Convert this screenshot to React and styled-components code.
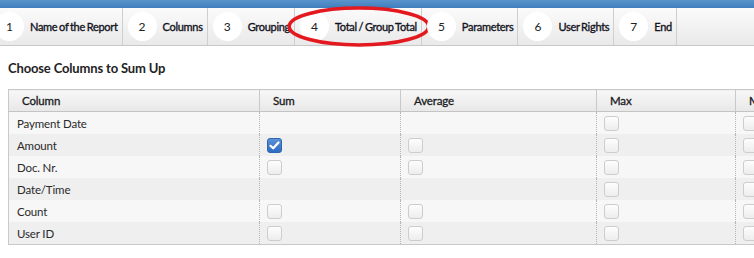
import React from 'react'
import styled, { createGlobalStyle } from 'styled-components'

const GlobalStyle = createGlobalStyle`
  body {
    margin: 0;
    background: #fff;
    font-family: Lato, "Noto Sans", sans-serif;
    overflow: hidden;
  }
`

const steps = [
  { n: 1, label: 'Name of the Report' },
  { n: 2, label: 'Columns' },
  { n: 3, label: 'Grouping' },
  { n: 4, label: 'Total / Group Total', active: true },
  { n: 5, label: 'Parameters' },
  { n: 6, label: 'User Rights' },
  { n: 7, label: 'End' },
]

// null = no checkbox, 0 = empty, 1 = checked
const rows = [
  { name: 'Payment Date', cells: [null, null, 0, 0] },
  { name: 'Amount', cells: [1, 0, 0, 0] },
  { name: 'Doc. Nr.', cells: [0, 0, 0, 0] },
  { name: 'Date/Time', cells: [null, null, 0, 0] },
  { name: 'Count', cells: [0, 0, 0, 0] },
  { name: 'User ID', cells: [0, 0, 0, 0] },
]

const columns = [
  { title: 'Column', width: 251 },
  { title: 'Sum', width: 141 },
  { title: 'Average', width: 196 },
  { title: 'Max', width: 139 },
  { title: 'Min', width: 140 },
]

function Check({ on }) {
  return (
    <Box on={on ? 1 : 0}>
      {on ? (
        <svg width="11" height="9" viewBox="0 0 11 9">
          <path d="M1.5 4.8 L4.2 7.3 L9.5 1.5" fill="none" stroke="#fff" strokeWidth="2.2" strokeLinecap="round" strokeLinejoin="round" />
        </svg>
      ) : null}
    </Box>
  )
}

export default function App() {
  return (
    <Page>
      <GlobalStyle />
      <TopBar />
      <Wizard>
        {steps.map((s, i) => (
          <Step key={s.n} first={i === 0 ? 1 : 0}>
            <Circle>{s.n}</Circle>
            <StepLabel>{s.label}</StepLabel>
            {s.active ? (
              <Ring viewBox="0 0 100 100" preserveAspectRatio="none">
                <ellipse cx="50" cy="50" rx="48.5" ry="45" fill="none" stroke="#e3191f" strokeWidth="3.6" vectorEffect="non-scaling-stroke" />
              </Ring>
            ) : null}
          </Step>
        ))}
      </Wizard>

      <Title>Choose Columns to Sum Up</Title>

      <Table>
        <colgroup>
          {columns.map((c) => (
            <col key={c.title} style={{ width: c.width }} />
          ))}
        </colgroup>
        <thead>
          <tr>
            {columns.map((c) => (
              <Th key={c.title}>{c.title}</Th>
            ))}
          </tr>
        </thead>
        <tbody>
          {rows.map((r, i) => (
            <Tr key={r.name} alt={i % 2}>
              <Td>{r.name}</Td>
              {r.cells.map((c, j) => (
                <CheckTd key={j}>{c === null ? null : <Check on={c === 1} />}</CheckTd>
              ))}
            </Tr>
          ))}
        </tbody>
      </Table>
    </Page>
  )
}

const Page = styled.div`
  width: 754px;
  height: 258px;
  overflow: hidden;
  color: #222;
`

const TopBar = styled.div`
  height: 8px;
  background: linear-gradient(#5a94cc, #3f7dbd);
`

const Wizard = styled.div`
  display: flex;
  height: 37px;
  background: linear-gradient(#fbfbfb, #e9e9e9);
  border-bottom: 1px solid #c8c8c8;
`

const Step = styled.div`
  position: relative;
  display: flex;
  align-items: center;
  gap: 6px;
  padding: 0 4px 0 5px;
  margin-left: ${(p) => (p.first ? '-10px' : '0')};
  border-right: 1px solid #cfcfcf;
`

const Circle = styled.div`
  width: 29px;
  height: 29px;
  border-radius: 50%;
  background: #fff;
  display: flex;
  align-items: center;
  justify-content: center;
  font-size: 12px;
  color: #222;
  flex-shrink: 0;
`

const StepLabel = styled.span`
  font-size: 11px;
  font-weight: 400;
  color: #14141e;
  white-space: nowrap;
  letter-spacing: -0.3px;
  word-spacing: -0.8px;
  -webkit-text-stroke: 0.35px #14141e;
`

const Ring = styled.svg`
  position: absolute;
  left: -8px;
  top: -2px;
  width: calc(100% + 18px);
  height: calc(100% + 4px);
  overflow: visible;
  pointer-events: none;
`

const Title = styled.h2`
  margin: 0;
  padding: 14px 0 0 8px;
  height: 29px;
  font-size: 13px;
  font-weight: 700;
  letter-spacing: -0.15px;
  color: #222;
`

const Table = styled.table`
  margin-left: 8px;
  width: 867px;
  table-layout: fixed;
  border-collapse: collapse;
  border: 1px solid #c9c9c9;
  font-size: 11.5px;
  letter-spacing: -0.15px;
`

const Th = styled.th`
  height: 21px;
  padding: 0 0 0 13px;
  text-align: left;
  font-weight: 400;
  -webkit-text-stroke: 0.3px #1a1a22;
  color: #1a1a22;
  background: linear-gradient(#f7f7f7, #e8e8e8);
  border-bottom: 1px solid #c4c4c4;
  border-left: 1px solid #c9c9c9;
`

const Tr = styled.tr`
  background: ${(p) => (p.alt ? '#efefef' : '#f7f7f7')};
`

const Td = styled.td`
  height: 22px;
  padding: 0 0 0 8px;
  color: #2a2a2a;
`

const CheckTd = styled.td`
  height: 22px;
  padding: 0 0 0 7px;
  border-left: 1px dotted #b5b5b5;
  vertical-align: middle;
`

const Box = styled.div`
  width: 15px;
  height: 15px;
  box-sizing: border-box;
  border-radius: 3px;
  display: flex;
  align-items: center;
  justify-content: center;
  border: 1px solid ${(p) => (p.on ? '#2f66b0' : '#cdcdcd')};
  background: ${(p) => (p.on ? 'linear-gradient(#5a92d8, #2f6cc0)' : 'linear-gradient(#fdfdfd, #ededed)')};
`
